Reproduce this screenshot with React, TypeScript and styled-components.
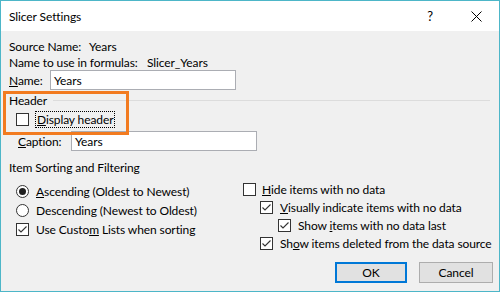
import React from 'react';
import styled, { createGlobalStyle } from 'styled-components';

const Global = createGlobalStyle`
  html, body { margin: 0; padding: 0; background: #ffffff; }
  body {
    font-family: Lato, "Liberation Sans", sans-serif;
    font-size: 12px;
    letter-spacing: -0.1px;
    color: #000;
  }
  * { box-sizing: border-box; }
`;

const Window = styled.div`
  position: relative;
  width: 500px;
  height: 292px;
  border: 1px solid #4db6c8;
  background: #f0f0f0;
  display: flex;
  flex-direction: column;
`;

const TitleBar = styled.div`
  height: 30px;
  background: #ffffff;
  display: flex;
  align-items: center;
  padding-left: 8px;
`;

const Title = styled.div`
  flex: 1;
`;

const TitleButton = styled.div<{ $w: number }>`
  width: ${(p) => p.$w}px;
  height: 30px;
  display: flex;
  align-items: center;
  justify-content: center;
  font-size: 13px;
`;

const Body = styled.div`
  flex: 1;
  display: flex;
  flex-direction: column;
  padding: 7px 6px 0 8px;
`;

const Row = styled.div<{ $h: number; $mt?: number; $indent?: number }>`
  height: ${(p) => p.$h}px;
  margin-top: ${(p) => p.$mt ?? 0}px;
  padding-left: ${(p) => p.$indent ?? 0}px;
  display: flex;
  align-items: center;
  white-space: nowrap;
`;

const Label = styled.span<{ $w: number }>`
  width: ${(p) => p.$w}px;
`;

const TextBox = styled.div<{ $w: number }>`
  width: ${(p) => p.$w}px;
  height: 20px;
  background: #ffffff;
  border: 1px solid #abadb3;
  display: flex;
  align-items: center;
  padding-left: 3px;
`;

const GroupLine = styled.div`
  flex: 1;
  height: 1px;
  background: #dcdcdc;
  margin: 0 3px 0 6px;
`;

const Box = styled.span`
  width: 13px;
  height: 13px;
  flex: none;
  border: 1px solid #333333;
  background: #ffffff;
  display: inline-flex;
  align-items: center;
  justify-content: center;
`;

const Radio = styled.span<{ $on: boolean }>`
  width: 13px;
  height: 13px;
  flex: none;
  border-radius: 50%;
  border: 1px solid #333333;
  background: #ffffff;
  display: inline-flex;
  align-items: center;
  justify-content: center;
  &::after {
    content: '';
    width: 7px;
    height: 7px;
    border-radius: 50%;
    background: ${(p) => (p.$on ? '#1f1f1f' : 'transparent')};
  }
`;

const OptionText = styled.span<{ $gap: number; $focus?: boolean }>`
  margin-left: ${(p) => p.$gap}px;
  ${(p) => (p.$focus ? 'outline: 1px dotted #000; outline-offset: 0px; padding: 0 1px; line-height: 15px;' : '')}
`;

const Options = styled.div`
  margin-top: 5px;
  display: grid;
  grid-template-columns: 234px 1fr;
`;

const Column = styled.div<{ $pt: number; $pl: number }>`
  display: flex;
  flex-direction: column;
  padding-top: ${(p) => p.$pt}px;
  padding-left: ${(p) => p.$pl}px;
`;

const Buttons = styled.div`
  margin-top: 10px;
  display: flex;
  justify-content: flex-end;
  gap: 12px;
`;

const Button = styled.div<{ $w: number; $default?: boolean }>`
  width: ${(p) => p.$w}px;
  height: 21px;
  background: #e1e1e1;
  border: ${(p) => (p.$default ? '2px solid #0078d7' : '1px solid #adadad')};
  display: flex;
  align-items: center;
  justify-content: center;
`;

const Highlight = styled.div`
  position: absolute;
  left: 2px;
  top: 90px;
  width: 126px;
  height: 44px;
  border: 3px solid #f27b20;
  pointer-events: none;
`;

const Check = () => (
  <svg width="11" height="11" viewBox="0 0 11 11">
    <polyline points="1.5,5.5 4,8 9.5,2.5" fill="none" stroke="#333" strokeWidth="1.1" />
  </svg>
);

const CheckOption: React.FC<{ checked: boolean; children: React.ReactNode; indent?: number; h: number; gap?: number }> = ({
  checked,
  children,
  indent,
  h,
  gap = 6,
}) => (
  <Row $h={h} $indent={indent}>
    <Box>{checked ? <Check /> : null}</Box>
    <OptionText $gap={gap}>{children}</OptionText>
  </Row>
);

export default function App() {
  return (
    <>
      <Global />
      <Window>
        <TitleBar>
          <Title>Slicer Settings</Title>
          <TitleButton $w={46}>?</TitleButton>
          <TitleButton $w={46}>
            <svg width="11" height="11" viewBox="0 0 11 11">
              <path d="M0.5 0.5 L10.5 10.5 M10.5 0.5 L0.5 10.5" stroke="#000" strokeWidth="1" />
            </svg>
          </TitleButton>
        </TitleBar>
        <Body>
          <Row $h={16}>
            <Label $w={80}>Source Name:</Label>
            <span>Years</span>
          </Row>
          <Row $h={16}>
            <Label $w={138}>Name to use in formulas:</Label>
            <span>Slicer_Years</span>
          </Row>
          <Row $h={20}>
            <Label $w={41}>
              <u>N</u>ame:
            </Label>
            <TextBox $w={186}>Years</TextBox>
          </Row>
          <Row $h={16} $mt={2}>
            <span>Header</span>
            <GroupLine />
          </Row>
          <Row $h={15} $mt={4} $indent={7}>
            <Box />
            <OptionText $gap={7} $focus>
              <u>D</u>isplay header
            </OptionText>
          </Row>
          <Row $h={20} $mt={4} $indent={9}>
            <Label $w={53}>
              <u>C</u>aption:
            </Label>
            <TextBox $w={186}>Years</TextBox>
          </Row>
          <Row $h={16} $mt={8}>
            <span>Item Sorting and Filtering</span>
          </Row>
          <Options>
            <Column $pt={2} $pl={7}>
              <Row $h={19}>
                <Radio $on={true} />
                <OptionText $gap={7}>
                  <u>A</u>scending (Oldest to Newest)
                </OptionText>
              </Row>
              <Row $h={19}>
                <Radio $on={false} />
                <OptionText $gap={7}>
                  Descendin<u>g</u> (Newest to Oldest)
                </OptionText>
              </Row>
              <CheckOption checked h={19} gap={7}>
                Use Custo<u>m</u> Lists when sorting
              </CheckOption>
            </Column>
            <Column $pt={0} $pl={0}>
              <CheckOption checked={false} h={18}>
                <u>H</u>ide items with no data
              </CheckOption>
              <CheckOption checked h={18} indent={17} gap={7}>
                <u>V</u>isually indicate items with no data
              </CheckOption>
              <CheckOption checked h={18} indent={35} gap={7}>
                Show <u>i</u>tems with no data last
              </CheckOption>
              <CheckOption checked h={18} indent={17} gap={7}>
                Sh<u>o</u>w items deleted from the data source
              </CheckOption>
            </Column>
          </Options>
          <Buttons>
            <Button $w={72} $default>
              OK
            </Button>
            <Button $w={74}>Cancel</Button>
          </Buttons>
        </Body>
        <Highlight />
      </Window>
    </>
  );
}
